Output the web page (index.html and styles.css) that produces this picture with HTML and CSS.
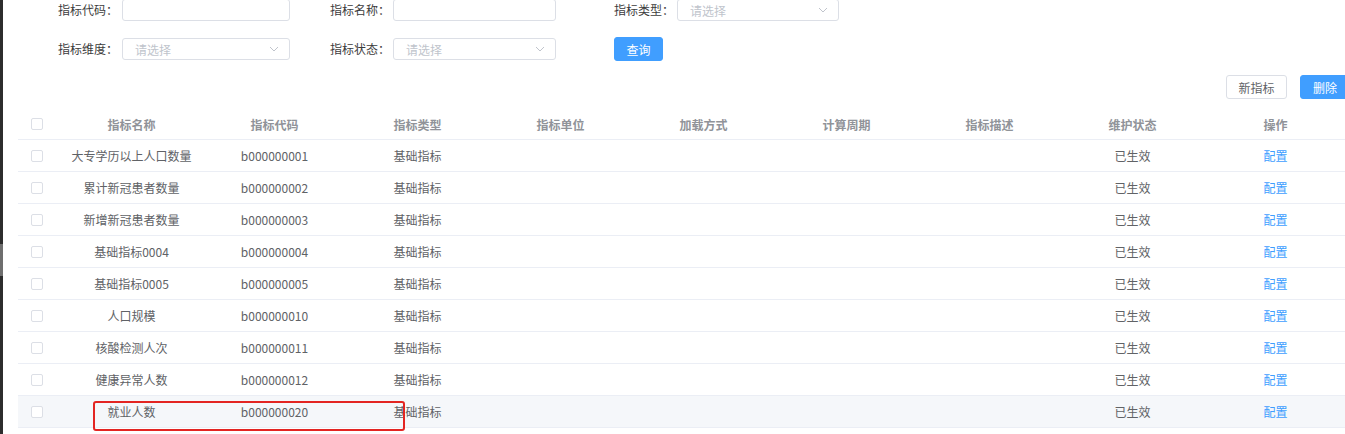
FILE: index.html
```html
<!DOCTYPE html>
<html lang="zh-CN">
<head>
<meta charset="utf-8">
<title>指标管理</title>
<link rel="stylesheet" href="styles.css">
</head>
<body>
<div class="page">
  <div class="edge"><div class="edge-top"></div><div class="edge-thumb"></div></div>
  <div class="main">
    <div class="search">
      <div class="field"><span class="label">指标代码：</span><div class="input w1"></div></div>
      <div class="field"><span class="label">指标名称：</span><div class="input w2"></div></div>
      <div class="field"><span class="label">指标类型：</span><div class="input select w3"><span class="ph">请选择</span><svg class="chev" viewBox="0 0 10 6" width="10" height="6"><path d="M1 1l4 4 4-4" fill="none" stroke="#c0c4cc" stroke-width="1"/></svg></div></div>
      <div class="field"><span class="label">指标维度：</span><div class="input select w1"><span class="ph">请选择</span><svg class="chev" viewBox="0 0 10 6" width="10" height="6"><path d="M1 1l4 4 4-4" fill="none" stroke="#c0c4cc" stroke-width="1"/></svg></div></div>
      <div class="field"><span class="label">指标状态：</span><div class="input select w2"><span class="ph">请选择</span><svg class="chev" viewBox="0 0 10 6" width="10" height="6"><path d="M1 1l4 4 4-4" fill="none" stroke="#c0c4cc" stroke-width="1"/></svg></div></div>
      <div class="field"><button class="btn primary query">查询</button></div>
    </div>
    <div class="toolbar">
      <button class="btn plain">新指标</button>
      <button class="btn primary del">删除</button>
    </div>
    <div class="table">
      <div class="row head">
        <div class="cell chk"><span class="box"></span></div>
        <div class="cell">指标名称</div><div class="cell">指标代码</div><div class="cell">指标类型</div><div class="cell">指标单位</div><div class="cell">加载方式</div><div class="cell">计算周期</div><div class="cell">指标描述</div><div class="cell">维护状态</div><div class="cell">操作</div>
      </div>
      <div class="row"><div class="cell chk"><span class="box"></span></div><div class="cell">大专学历以上人口数量</div><div class="cell">b000000001</div><div class="cell">基础指标</div><div class="cell"></div><div class="cell"></div><div class="cell"></div><div class="cell"></div><div class="cell">已生效</div><div class="cell"><a class="link">配置</a></div></div>
      <div class="row"><div class="cell chk"><span class="box"></span></div><div class="cell">累计新冠患者数量</div><div class="cell">b000000002</div><div class="cell">基础指标</div><div class="cell"></div><div class="cell"></div><div class="cell"></div><div class="cell"></div><div class="cell">已生效</div><div class="cell"><a class="link">配置</a></div></div>
      <div class="row"><div class="cell chk"><span class="box"></span></div><div class="cell">新增新冠患者数量</div><div class="cell">b000000003</div><div class="cell">基础指标</div><div class="cell"></div><div class="cell"></div><div class="cell"></div><div class="cell"></div><div class="cell">已生效</div><div class="cell"><a class="link">配置</a></div></div>
      <div class="row"><div class="cell chk"><span class="box"></span></div><div class="cell">基础指标0004</div><div class="cell">b000000004</div><div class="cell">基础指标</div><div class="cell"></div><div class="cell"></div><div class="cell"></div><div class="cell"></div><div class="cell">已生效</div><div class="cell"><a class="link">配置</a></div></div>
      <div class="row"><div class="cell chk"><span class="box"></span></div><div class="cell">基础指标0005</div><div class="cell">b000000005</div><div class="cell">基础指标</div><div class="cell"></div><div class="cell"></div><div class="cell"></div><div class="cell"></div><div class="cell">已生效</div><div class="cell"><a class="link">配置</a></div></div>
      <div class="row"><div class="cell chk"><span class="box"></span></div><div class="cell">人口规模</div><div class="cell">b000000010</div><div class="cell">基础指标</div><div class="cell"></div><div class="cell"></div><div class="cell"></div><div class="cell"></div><div class="cell">已生效</div><div class="cell"><a class="link">配置</a></div></div>
      <div class="row"><div class="cell chk"><span class="box"></span></div><div class="cell">核酸检测人次</div><div class="cell">b000000011</div><div class="cell">基础指标</div><div class="cell"></div><div class="cell"></div><div class="cell"></div><div class="cell"></div><div class="cell">已生效</div><div class="cell"><a class="link">配置</a></div></div>
      <div class="row"><div class="cell chk"><span class="box"></span></div><div class="cell">健康异常人数</div><div class="cell">b000000012</div><div class="cell">基础指标</div><div class="cell"></div><div class="cell"></div><div class="cell"></div><div class="cell"></div><div class="cell">已生效</div><div class="cell"><a class="link">配置</a></div></div>
      <div class="row hover"><div class="cell chk"><span class="box"></span></div><div class="cell">就业人数</div><div class="cell">b000000020</div><div class="cell">基础指标</div><div class="cell"></div><div class="cell"></div><div class="cell"></div><div class="cell"></div><div class="cell">已生效</div><div class="cell"><a class="link">配置</a></div><div class="mark"></div></div>
    </div>
  </div>
</div>
</body>
</html>
```

FILE: styles.css
```css
* { box-sizing: border-box; }
html, body { margin: 0; padding: 0; background: #fff; overflow: hidden; }
body {
  font-family: "Noto Sans CJK SC", "Microsoft YaHei", sans-serif;
  font-size: 12px;
  color: #606266;
}
.page { display: flex; width: 1350px; height: 434px; }
.edge { width: 3px; flex: none; display: flex; flex-direction: column; background: #2d2d2d; }
.edge-top { height: 244px; }
.edge-thumb { height: 32px; background: #6e6e6e; }
.main { flex: 1; padding-left: 15px; display: flex; flex-direction: column; }

.search {
  display: grid;
  grid-template-columns: 272px 284px 240px;
  row-gap: 17px;
  padding-left: 40px;
  margin-top: -1px;
}
.field { display: flex; align-items: center; height: 22px; }
.label { width: 64px; flex: none; color: #3c3c3c; line-height: 22px; }
.field:nth-child(3n+2) .label, .field:nth-child(3n) .label { width: 63px; }
.input {
  height: 22px;
  border: 1px solid #dcdfe6;
  border-radius: 3px;
  background: #fff;
  display: flex;
  align-items: center;
  padding: 0 12px;
}
.w1 { width: 168px; }
.w2 { width: 163px; }
.w3 { width: 162px; }
.select { justify-content: space-between; }
.ph { color: #c0c4cc; }
.chev { margin-right: -2px; }

.btn {
  font-family: inherit;
  font-size: 12px;
  height: 24px;
  border-radius: 3px;
  border: 1px solid #dcdfe6;
  background: #fff;
  color: #606266;
  padding: 0;
  cursor: pointer;
}
.btn.primary { background: #409eff; border-color: #409eff; color: #fff; }
.query { width: 49px; }
.toolbar {
  display: flex;
  justify-content: flex-end;
  gap: 13px;
  margin-top: 15px;
}
.plain { width: 61px; }
.del { width: 50px; }

.table { margin-top: 8px; width: 1329px; }
.row {
  display: grid;
  grid-template-columns: 42px repeat(9, 143px);
  height: 32px;
  border-bottom: 1px solid #ebeef5;
  position: relative;
}
.row.head { height: 33px; color: #909399; font-weight: 600; }
.row.head .cell { padding-top: 2px; }
.row.hover { background: #f5f7fa; }
.cell {
  display: flex;
  align-items: center;
  justify-content: center;
  white-space: nowrap;
}
.chk { justify-content: flex-end; padding-right: 17px; }
.box {
  width: 12px;
  height: 12px;
  border: 1px solid #dcdfe6;
  border-radius: 2px;
  background: #fff;
}
.link { color: #409eff; text-decoration: none; }
.mark {
  position: absolute;
  left: 75px;
  top: 5px;
  width: 312px;
  height: 30px;
  border: 2px solid #e32522;
  border-radius: 3px;
}
```
